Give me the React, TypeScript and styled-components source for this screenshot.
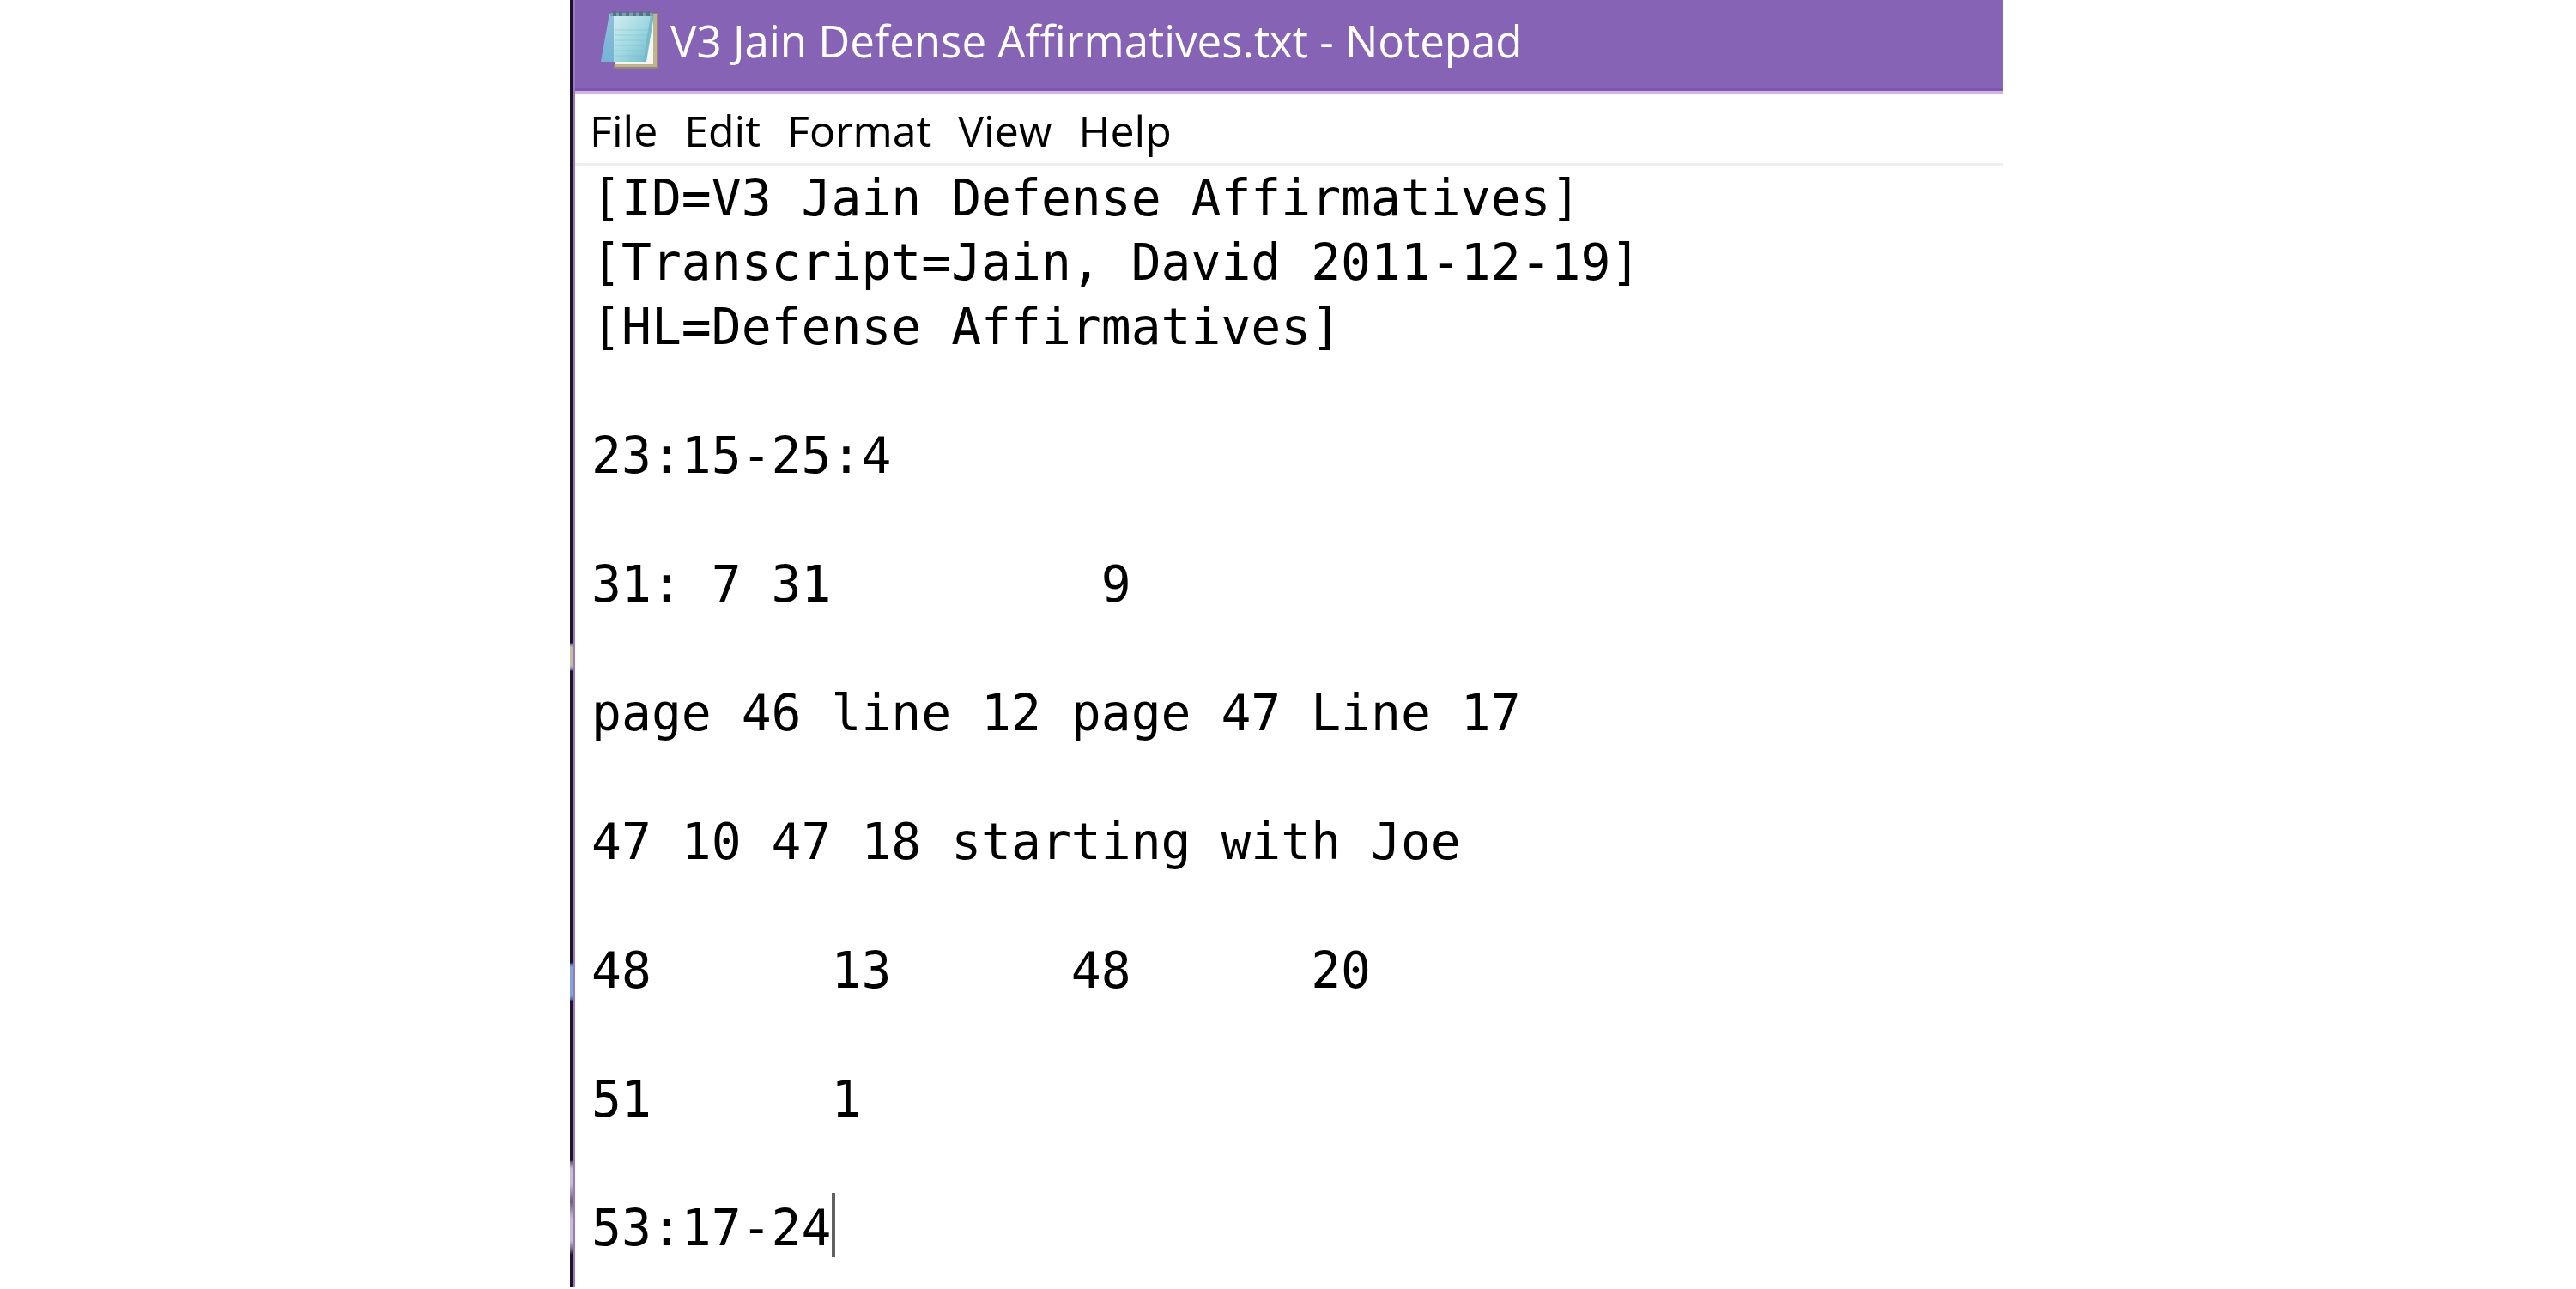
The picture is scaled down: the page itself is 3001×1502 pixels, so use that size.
import React, { useState } from "react";
import styled, { createGlobalStyle } from "styled-components";

const GlobalStyle = createGlobalStyle`
  * { box-sizing: border-box; }
  body { margin: 0; background: #fff; overflow: hidden; }
`;

const uiFont = `"Open Sans", "Noto Sans", sans-serif`;
const edgeStops = `#1d1226 0 749px, #3f68a8 750px, #c9bda0 754px 776px, #3f68a8 781px,
  #1d1226 782px 1122px, #3f68a8 1123px, #7fa6d6 1127px 1160px, #3f68a8 1165px,
  #1d1226 1166px 1352px, #6e6478 1354px, #c8bcd4 1362px 1380px, #6b6272 1400px,
  #c8bcd4 1420px 1446px, #6e6478 1456px, #1d1226 1462px`;

const Desktop = styled.div`
  display: flex;
  min-height: 100vh;
  padding: 0 22.23% 2px 22.13%;
`;

const DesktopEdge = styled.div`
  flex: none;
  width: 3px;
  background: linear-gradient(to bottom, ${edgeStops});
`;

const Window = styled.main`
  flex: 1;
  min-width: 0;
  display: flex;
  flex-direction: column;
  border-left: 3px solid #9b77c8;
  background: #fff;
`;

const TitleBar = styled.header`
  display: flex;
  align-items: center;
  gap: 11px;
  height: 109px;
  padding: 0 28px 12px;
  background: #8763b6;
  border-bottom: 3px solid #cdb6e2;
  box-shadow: inset 0 -3px 0 #7f57b1;
`;

const Title = styled.h1`
  margin: 0;
  color: #fff;
  font: 400 51px/64px ${uiFont};
  white-space: nowrap;
`;

const MenuBar = styled.nav`
  display: flex;
  gap: 31px;
  height: 84px;
  padding: 0 17px;
  border-bottom: 3px solid #eee;
`;

const MenuButton = styled.button`
  padding: 0;
  border: 0;
  background: none;
  color: #000;
  font: 400 50px/64px ${uiFont};
  padding-top: 4px;
`;

const Editor = styled.div`
  position: relative;
  flex: 1;
  padding: 1px 0 0 19px;
  font: 400 58px/75px "DejaVu Sans Mono", monospace;
`;

const TextArea = styled.textarea`
  display: block;
  width: 100%;
  padding: 0;
  border: 0;
  outline: 0;
  resize: none;
  overflow: hidden;
  background: none;
  color: #000;
  font: inherit;
  tab-size: 8;
  white-space: pre;
`;

const Caret = styled.span<{ $line: number; $column: number }>`
  position: absolute;
  top: calc(${(p) => p.$line} * 75px - 3px);
  left: calc(${(p) => p.$column} * 1ch + 20px);
  width: 4px;
  height: 75px;
  background: #606060;
`;

const NotepadIcon = () => (
  <svg width="72" height="72" viewBox="0 0 72 72" aria-hidden="true">
    <defs>
      <linearGradient id="page" x1="0" y1="0" x2="1" y2="1">
        <stop offset="0" stopColor="#d3eef2" />
        <stop offset="0.5" stopColor="#a2d9e2" />
        <stop offset="1" stopColor="#6bb9c9" />
      </linearGradient>
      <linearGradient id="back" x1="0" y1="0" x2="0" y2="1">
        <stop offset="0" stopColor="#8fc0dc" />
        <stop offset="1" stopColor="#76b3d6" />
      </linearGradient>
    </defs>
    <path d="M64 4H69V69H17V64H64Z" fill="#978676" />
    <path d="M18 5H67V67H18Z" fill="#beb590" />
    <path d="M18 5H63V64H18Z" fill="#f5f6f2" />
    <path d="M12 5H19V61H2Z" fill="url(#back)" />
    <path d="M17 5H63L60 22L54 61H17Z" fill="url(#page)" />
    <path d="M60 7H64L55 61H51Z" fill="#76bccb" />
    <path d="M18 24H58M18 30H57M18 36H56M18 42H55M18 48H54M18 54H53" stroke="#75bac8" strokeWidth="1" opacity="0.4" />
    <path d="M13 4H63V8H13Z" fill="#6ea5b3" />
    <path d="M18 2V8M25 2V8M33 2V8M41 2V8M49 2V8M57 2V8" stroke="#5b7280" strokeWidth="4" />
  </svg>
);

const menus = ["File", "Edit", "Format", "View", "Help"];

const initialText = [
  "[ID=V3 Jain Defense Affirmatives]",
  "[Transcript=Jain, David 2011-12-19]",
  "[HL=Defense Affirmatives]",
  "",
  "23:15-25:4",
  "",
  "31: 7 31\t 9",
  "",
  "page 46 line 12 page 47 Line 17",
  "",
  "47 10 47 18 starting with Joe",
  "",
  "48\t13\t48\t20",
  "",
  "51\t1",
  "",
  "53:17-24",
].join("\n");

export default function App() {
  const [text, setText] = useState(initialText);
  const lines = text.split("\n");

  return (
    <>
      <GlobalStyle />
      <Desktop>
        <DesktopEdge />
        <Window>
          <TitleBar>
            <NotepadIcon />
            <Title>V3 Jain Defense Affirmatives.txt - Notepad</Title>
          </TitleBar>
          <MenuBar aria-label="Menu">
            {menus.map((name) => (
              <MenuButton key={name} type="button">{name}</MenuButton>
            ))}
          </MenuBar>
          <Editor>
            <TextArea
              aria-label="Text editor"
              rows={lines.length}
              spellCheck={false}
              value={text}
              onChange={(e) => setText(e.target.value)}
            />
            <Caret $line={lines.length - 1} $column={lines[lines.length - 1].length} />
          </Editor>
        </Window>
      </Desktop>
    </>
  );
}
